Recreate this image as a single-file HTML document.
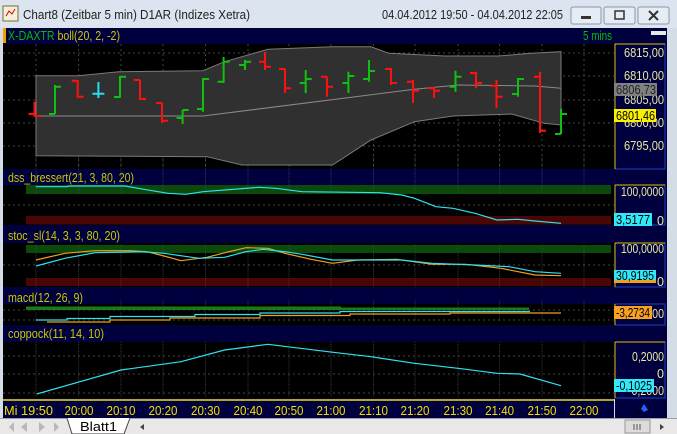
<!DOCTYPE html>
<html><head><meta charset="utf-8"><style>
html,body{margin:0;padding:0;width:677px;height:434px;overflow:hidden;background:#d4dce6;}
svg{display:block}
text{font-family:"Liberation Sans",sans-serif;}
</style></head><body>
<svg width="677" height="434" viewBox="0 0 677 434" xmlns="http://www.w3.org/2000/svg">
<rect x="0" y="0" width="677" height="28" fill="#dbe4ef"/>
<rect x="3" y="6" width="15" height="15" fill="#f4f0d8" stroke="#7a6a3a"/>
<path d="M6 16 L9 11 L12 14 L15 9" stroke="#c00" fill="none"/>
<text x="23" y="19" font-size="13" fill="#222" textLength="227" lengthAdjust="spacingAndGlyphs">Chart8 (Zeitbar 5 min)  D1AR (Indizes Xetra)</text>
<text x="382" y="19" font-size="13" fill="#222" textLength="181" lengthAdjust="spacingAndGlyphs">04.04.2012 19:50 - 04.04.2012 22:05</text>
<g fill="#e6ecf3" stroke="#8a98aa"><rect x="571" y="7" width="30" height="17" rx="2"/><rect x="604" y="7" width="31" height="17" rx="2"/><rect x="638" y="7" width="31" height="17" rx="2"/></g>
<rect x="581" y="16" width="10" height="3" fill="#333"/>
<rect x="615" y="11" width="9" height="8" fill="none" stroke="#333" stroke-width="1.5"/>
<path d="M649 11 L658 20 M658 11 L649 20" stroke="#333" stroke-width="2"/>
<rect x="0" y="28" width="677" height="390" fill="#d4dce6"/>
<rect x="3" y="28" width="664" height="371" fill="#00003e"/>
<rect x="3" y="28" width="3" height="15" fill="#f0a000"/>
<rect x="651" y="31" width="15" height="4" fill="#e8e8e8"/>
<g font-size="12.5">
<text x="8" y="40" fill="#00c000" textLength="112" lengthAdjust="spacingAndGlyphs">X-DAXTR <tspan fill="#c8c800">boll(20, 2, -2)</tspan></text>
<text x="583" y="40" fill="#00c000" textLength="29" lengthAdjust="spacingAndGlyphs">5 mins</text>
<text x="8" y="182" fill="#c8c800" textLength="126" lengthAdjust="spacingAndGlyphs">dss_bressert(21, 3, 80, 20)</text>
<text x="8" y="240" fill="#c8c800" textLength="112" lengthAdjust="spacingAndGlyphs">stoc_sl(14, 3, 3, 80, 20)</text>
<text x="8" y="302" fill="#c8c800" textLength="75" lengthAdjust="spacingAndGlyphs">macd(12, 26, 9)</text>
<text x="8" y="338" fill="#c8c800" textLength="96" lengthAdjust="spacingAndGlyphs">coppock(11, 14, 10)</text>
</g>
<g fill="#000"><rect x="3" y="44" width="611" height="125"/><rect x="3" y="185" width="611" height="40"/><rect x="3" y="243" width="611" height="44"/><rect x="3" y="304" width="611" height="21"/><rect x="3" y="342" width="611" height="56"/></g>
<g fill="#00003e" stroke="#2040c0"><rect x="615" y="44" width="50" height="125"/><rect x="615" y="185" width="50" height="40"/><rect x="615" y="243" width="50" height="44"/><rect x="615" y="304" width="50" height="21"/><rect x="615" y="342" width="50" height="56"/></g>
<g stroke="#e0c000"><path d="M615 44V169M615 185V225M615 243V287M615 304V325M615 342V398M615 44H665M615 185H665M615 243H665M615 342H665"/></g>
<rect x="26" y="185" width="585" height="9" fill="#0b4a0b"/><rect x="26" y="216" width="585" height="8.5" fill="#4a0505"/>
<rect x="26" y="245" width="585" height="8" fill="#0b4a0b"/><rect x="26" y="278" width="585" height="8" fill="#4a0505"/>
<g stroke="#444" stroke-dasharray="2,3" stroke-width="1">
<path id="vg" d="M36 44V169M78.6 44V169M121 44V169M163 44V169M205.5 44V169M248 44V169M289 44V169M331 44V169M373.5 44V169M415 44V169M458 44V169M499.6 44V169M542 44V169M584 44V169"/>
<use href="#vg" transform="translate(0,141) scale(1,0.32)"/>
<use href="#vg" transform="translate(0,229) scale(1,0.352)"/>
<use href="#vg" transform="translate(0,293) scale(1,0.168)"/>
<use href="#vg" transform="translate(0,322) scale(1,0.448)"/>
<path d="M3 53H614M3 76H614M3 100H614M3 123H614M3 146H614M3 205H614M3 265H614M3 310H614M3 320H614M3 356H614M3 374H614M3 393H614"/>
</g>
<path d="M36,75.7 78,75.7 119,71.7 203,70.7 224.5,61.7 268,49.3 332.5,46.7 371,46.7 388.6,53.3 445,56 498.7,56 531,53.3 561,51.7 L561,125 544,123.3 511.7,114 453,116 414.5,121.7 371,140 332.5,165 242,165 207,156.7 36,155.7Z" fill="#303030" stroke="#7a7a7a"/>
<path d="M36,116 203,116 414.5,89.3 457.7,85 535,86 561,88.3" fill="none" stroke="#8a8a8a"/>
<g stroke-width="2" fill="none">
<g stroke="#ff1010">
<path d="M34.5 101.7V116.7M28.5 114H34.5M34.5 116H40.5"/>
<path d="M77.7 80V97.7M71.7 80.7H77.7M77.7 96.7H83.7"/>
<path d="M140 80V100M134 80H140M140 99H146"/>
<path d="M162 103V123M156 103H162M162 120.7H168"/>
<path d="M265 52V70M259 61.7H265M265 66.7H271"/>
<path d="M285 69V93M279 69H285M285 88.3H291"/>
<path d="M327 76.7V96.7M321 76.7H327M327 86.7H333"/>
<path d="M391 68V85M385 69H391M391 83H397"/>
<path d="M413 80V103M407 81.7H413M413 90.7H419"/>
<path d="M434 87V98M428 88.3H434M434 90.7H440"/>
<path d="M476 71.7V88.3M470 73H476M476 83H482"/>
<path d="M496.5 80V108M490.5 85.7H496.5M496.5 96.7H502.5"/>
<path d="M540 71.7V133M534 76.7H540M540 130.7H546"/>
</g>
<g stroke="#10c010">
<path d="M55 85V114M49 114H55M55 86.7H61"/>
<path d="M120 76V97.7M114 97H120M120 76.7H126"/>
<path d="M182.6 110V124M176.6 118H182.6M182.6 110H188.6"/>
<path d="M203 78V111.7M197 109H203M203 79H209"/>
<path d="M223.6 57V83M217.6 81.7H223.6M223.6 61.7H229.6"/>
<path d="M245 60V70M239 65H245M245 61.7H251"/>
<path d="M305.7 70V93M299.7 83H305.7M305.7 79H311.7"/>
<path d="M348.4 71.7V93M342.4 83H348.4M348.4 76H354.4"/>
<path d="M369 60V81.7M363 79H369M369 71H375"/>
<path d="M455.5 70.7V91.7M449.5 86.7H455.5M455.5 76.7H461.5"/>
<path d="M518 78V96.7M512 94H518M518 79H524"/>
<path d="M561 109V134M555 134H561M561 114H567"/>
</g>
<path d="M98.4 82V98M92.4 93.7H104.4" stroke="#20e0f0"/>
</g>
<polyline fill="none" stroke="#30e0f0" stroke-width="1.2" points="36,186.7 67,186.7 69,186 125,186 138,188.3 168,193.3 186,194.3 203,191.7 259,187.3 276,188.3 302,191.7 380,192.7 402,195 414.5,198.3 436,206.7 453,208.3 475,213.3 497,220 518,219.3 535,221 561,223.3"/>
<polyline fill="none" stroke="#f0a020" stroke-width="1.2" points="36,260 65,253.3 95,250.7 130,250.7 147,251.7 164,256 181,260.7 207,257.3 229,251.7 246,247.7 268,248.3 285,253.3 311,259.3 332.5,263.3 358,260 397,259.3 432,264.3 466,264.3 501,268.3 535,275 561,275.7"/>
<polyline fill="none" stroke="#30e0f0" stroke-width="1.2" points="36,266 65,258.3 95,252.7 142,251.7 164,253.3 199,258.3 224.5,257.3 246,251.7 263,249.3 285,251.7 302,254.3 332.5,260 401.5,260 432,263.3 475,265 509,266.7 535,271.7 561,273.3"/>
<g fill="#1a7a1a"><rect x="26" y="306.5" width="315" height="3.5"/><rect x="341" y="307.5" width="188" height="2.5"/></g>
<polyline fill="none" stroke="#30e0f0" stroke-width="1.2" points="36,320 67,320 67,318.5 110,318.5 110,316.5 195,316.5 195,314.5 260,314.5 260,313 340,313 340,311.5 530,311.5"/>
<polyline fill="none" stroke="#f0a020" stroke-width="1.2" points="47,322 110,322 110,320 170,320 170,318 260,318 260,315.5 350,315.5 350,314 450,314 450,313 561,313"/>
<polyline fill="none" stroke="#30e0f0" stroke-width="1.2" points="36.7,394 121,370 181,361.7 224.5,350 268,344.3 328,351.7 371,356.7 414.5,363.3 458,368.3 497,373.3 520,374 561,385.7"/>
<g font-size="12.5" fill="#e8e8a0" text-anchor="end" lengthAdjust="spacingAndGlyphs">
<text x="664" y="57" textLength="40" lengthAdjust="spacingAndGlyphs">6815,00</text><text x="664" y="80" textLength="40" lengthAdjust="spacingAndGlyphs">6810,00</text><text x="664" y="104" textLength="40" lengthAdjust="spacingAndGlyphs">6805,00</text><text x="664" y="127" textLength="40" lengthAdjust="spacingAndGlyphs">6800,00</text><text x="664" y="150" textLength="40" lengthAdjust="spacingAndGlyphs">6795,00</text>
<text x="664" y="196" textLength="43" lengthAdjust="spacingAndGlyphs">100,0000</text><text x="664" y="225">0</text>
<text x="664" y="253" textLength="43" lengthAdjust="spacingAndGlyphs">100,0000</text><text x="664" y="286">0</text>
<text x="664" y="318" textLength="36" lengthAdjust="spacingAndGlyphs">-3,2000</text>
<text x="664" y="361" textLength="32" lengthAdjust="spacingAndGlyphs">0,2000</text><text x="664" y="378">0</text><text x="664" y="395" textLength="36" lengthAdjust="spacingAndGlyphs">-0,2000</text>
</g>
<rect x="614" y="83" width="43" height="13" fill="#808080"/><text x="616" y="94" font-size="12.5" fill="#222" textLength="40" lengthAdjust="spacingAndGlyphs">6806,73</text>
<rect x="614" y="109" width="42" height="13" fill="#f8f000"/><text x="616" y="120" font-size="12.5" fill="#000" textLength="39" lengthAdjust="spacingAndGlyphs">6801,46</text>
<rect x="614" y="213" width="38" height="13" fill="#30e8f8"/><text x="616" y="224" font-size="12.5" fill="#000" textLength="34" lengthAdjust="spacingAndGlyphs">3,5177</text>
<rect x="614" y="270" width="42" height="13" fill="#30e8f8"/><rect x="614" y="280" width="42" height="3" fill="#f0a020"/><text x="616" y="280" font-size="12.5" fill="#000" textLength="38" lengthAdjust="spacingAndGlyphs">30,9195</text>
<rect x="614" y="306" width="38" height="13" fill="#f8a020"/><text x="616" y="317" font-size="12.5" fill="#000" textLength="34" lengthAdjust="spacingAndGlyphs">-3,2734</text>
<rect x="614" y="379" width="40" height="13" fill="#30e8f8"/><text x="616" y="390" font-size="12.5" fill="#000" textLength="36" lengthAdjust="spacingAndGlyphs">-0,1025</text>
<rect x="3" y="399" width="611" height="19" fill="#00003e"/>
<path d="M3 400H614" stroke="#f0e000" stroke-width="1.5"/>
<g font-size="13" fill="#f0e000" text-anchor="middle">
<text x="4" y="415" text-anchor="start" textLength="49" lengthAdjust="spacingAndGlyphs">Mi 19:50</text>
<text x="79" y="415" textLength="29" lengthAdjust="spacingAndGlyphs">20:00</text><text x="121" y="415" textLength="29" lengthAdjust="spacingAndGlyphs">20:10</text><text x="163" y="415" textLength="29" lengthAdjust="spacingAndGlyphs">20:20</text><text x="205.5" y="415" textLength="29" lengthAdjust="spacingAndGlyphs">20:30</text><text x="248" y="415" textLength="29" lengthAdjust="spacingAndGlyphs">20:40</text><text x="289" y="415" textLength="29" lengthAdjust="spacingAndGlyphs">20:50</text><text x="331" y="415" textLength="29" lengthAdjust="spacingAndGlyphs">21:00</text><text x="373.5" y="415" textLength="29" lengthAdjust="spacingAndGlyphs">21:10</text><text x="415" y="415" textLength="29" lengthAdjust="spacingAndGlyphs">21:20</text><text x="458" y="415" textLength="29" lengthAdjust="spacingAndGlyphs">21:30</text><text x="499.6" y="415" textLength="29" lengthAdjust="spacingAndGlyphs">21:40</text><text x="542" y="415" textLength="29" lengthAdjust="spacingAndGlyphs">21:50</text><text x="584" y="415" textLength="29" lengthAdjust="spacingAndGlyphs">22:00</text>
</g>
<rect x="615" y="399" width="52" height="19" fill="#00003e"/>
<path d="M636 414L645 405" stroke="#000" stroke-width="1.5"/><path d="M644 404L648 410L644 412L641 409Z" fill="#2060ff"/>
<rect x="0" y="418" width="677" height="16" fill="#e8e8e8"/>
<path d="M0 418.5H677" stroke="#a0a0a0"/>
<g fill="#b8b8b8"><path d="M6 422V432M9 427L14 422V432Z"/><path d="M21 427L27 422V432Z"/><path d="M39 422L45 427L39 432Z"/><path d="M54 422L59 427L54 432ZM61 422V432"/></g>
<path d="M67 418L72 434H124L130 418" fill="#fff" stroke="#444"/>
<text x="80" y="431" font-size="13" fill="#000" textLength="37" lengthAdjust="spacingAndGlyphs">Blatt1</text>
<path d="M140 427L144 424V430Z" fill="#444"/>
<rect x="625" y="420" width="25" height="13" fill="#dcdcdc" stroke="#999"/>
<path d="M634 424V430M637 424V430M640 424V430" stroke="#555"/>
<path d="M660 424L664 427L660 430Z" fill="#444"/>
</svg>
</body></html>
